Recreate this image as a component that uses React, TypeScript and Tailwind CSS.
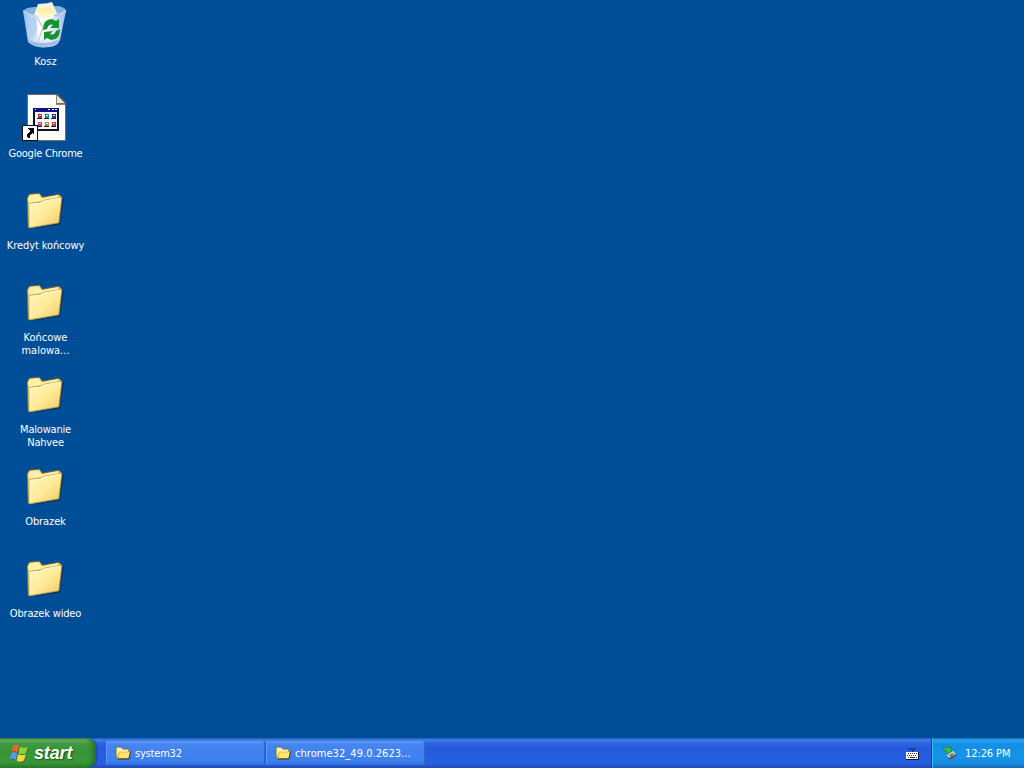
import React from 'react';

interface IconProps {
    className?: string;
}

interface DesktopItem {
    lines: string[];
    spacing: string;
    icon: React.FC<IconProps>;
}

const RecycleBinIcon: React.FC<IconProps> = ({ className }) => (
    <svg className={className} viewBox="0 0 48 48">
        <defs>
            <linearGradient id="bin" x1="0" y1="0" x2="1" y2="0">
                <stop offset="0" stopColor="#8fb9ea" />
                <stop offset="0.25" stopColor="#cfe2f6" />
                <stop offset="0.6" stopColor="#eaf3f9" />
                <stop offset="1" stopColor="#a3bdea" />
            </linearGradient>
        </defs>
        <path d="M2 10 Q5 6 15 6 L38 5 Q46 7 45 11 Q40 14 25 15 Q8 16 2 10Z" fill="#86b2e2" />
        <path d="M13 14 L17 3 L29 2 L34 14Z" fill="#f6f3d8" />
        <path d="M26 12 L27 2 L31 1 L36 12 L32 16Z" fill="#eef1f6" />
        <path d="M16 8 L31 5 L35 13 L20 17Z" fill="#fdf0a6" />
        <path d="M2 10 Q12 17 25 16 Q39 15 45 10 L39 39 Q37 45 28 46 Q14 48 7 41Z" fill="url(#bin)" />
        <path d="M6 17 L15 16 L17 26 L11 39Z" fill="#b3ccf2" opacity="0.8" />
        <path d="M15 12 L34 11 L28 28 L20 38 L17 42Z" fill="#fffef4" opacity="0.9" />
        <path d="M17 11 L33 8 L34 13 L20 16Z" fill="#fdf3b4" opacity="0.8" />
        <path d="M16 16 L22 27 L17 41" fill="none" stroke="#b9c6e8" strokeWidth="1.2" />
        <path d="M7 39 Q20 45 38 39 Q35 46 24 46 Q12 47 7 39Z" fill="#8eace6" opacity="0.75" />
        <path d="M2 10 Q8 14 15 15" fill="none" stroke="#e8f4ff" strokeWidth="0.9" />
        <path d="M34 14 Q41 13 45 10" fill="none" stroke="#e8f4ff" strokeWidth="0.9" />
        <g fill="#17912c">
            <path d="M22 29 Q22 18 31 18 L35 20 L38 18 L38 27 L29 27 L32 24 Q28 22 26 28Z" />
            <path d="M23 31 L32 30 L29 33 Q33 35 35 30 L39 28 Q39 39 30 39 L26 37 L23 39Z" />
        </g>
    </svg>
);

const ProgramIcon: React.FC<IconProps> = ({ className }) => (
    <svg className={className} viewBox="0 0 48 48" shapeRendering="crispEdges">
        <path d="M6 1 H36 L45 10 V48 H6Z" fill="#796b52" />
        <path d="M7 2 H35 V11 H44 V47 H7Z" fill="#fdfdfd" />
        <path d="M36 3 L43 10 H36Z" fill="#e9e7df" />
        <path d="M35 2 V11 H44" fill="none" stroke="#8d8673" strokeWidth="1" />
        <path d="M12 15 H38 V38 H12Z" fill="#12121c" />
        <path d="M12 15 H37 V19 H12Z" fill="#101087" />
        <path d="M14 19 H36 V36 H14Z" fill="#f5f5f5" />
        <path d="M14 16h1v1h-1zM27 16h2v1h-2zM31 16h2v1h-2zM34 16h2v1h-2z" fill="#ffffff" />
        <path d="M17 21h4v4h-4z" fill="#be2929" />
        <path d="M24 21h4v4h-4z" fill="#208d9b" />
        <path d="M31 21h4v4h-4z" fill="#243a9a" />
        <path d="M17 29h4v4h-4z" fill="#b03e81" />
        <path d="M24 29h4v4h-4z" fill="#b6893b" />
        <path d="M31 29h4v4h-4z" fill="#be3540" />
        <path d="M16 25h5v1h-5zM23 25h5v1h-5zM30 25h5v1h-5zM16 33h5v1h-5zM23 33h5v1h-5zM30 33h5v1h-5zM17 21h1v1h-1zM24 21h1v1h-1zM31 21h1v1h-1z" fill="#222222" />
        <path d="M18 22h2v1h-2zM25 22h2v1h-2zM32 22h2v1h-2zM18 30h2v1h-2zM25 30h2v1h-2zM32 30h2v1h-2z" fill="#f2e8e8" />
        <path d="M1 32 H17 V48 H1Z" fill="#101010" />
        <path d="M2 33 H16 V47 H2Z" fill="#ffffff" />
        <path d="M6 35 H13 V42 L11 40 L9 42 V45 H7 L6 43 L7 40 L9 38Z" fill="#050505" />
    </svg>
);

const FolderIcon: React.FC<IconProps> = ({ className }) => (
    <svg className={className} viewBox="0 0 47 47">
        <defs>
            <linearGradient id="folder" x1="0" y1="0" x2="1" y2="1">
                <stop offset="0" stopColor="#fff6b9" />
                <stop offset="0.5" stopColor="#ffec9b" />
                <stop offset="1" stopColor="#edc65c" />
            </linearGradient>
        </defs>
        <path d="M8 43 L38 39 L42 13 L40 11 L37 37Z" fill="#07294a" opacity="0.7" />
        <path d="M7 42 L6 13 L8 9 L18 8 L21 12 L37 9 L40 12 L37 37Z" fill="#ebcb68" stroke="#6f612b" strokeWidth="0.8" />
        <path d="M7 13 L9 10 L17 9 L20 13 L36 10 V13 L11 17 L8 19Z" fill="#fff0a9" />
        <path d="M8 18 L19 17 L22 15 L40 12 L37 37 L8 42Z" fill="url(#folder)" stroke="#a99547" strokeWidth="0.7" />
        <path d="M9 41 L9 19 L20 18 L23 16 L38 13" fill="none" stroke="#fffbd2" strokeWidth="1" />
    </svg>
);

const SmallFolderIcon: React.FC<IconProps> = ({ className }) => (
    <svg className={className} viewBox="0 0 16 16">
        <path d="M1 3 L2 2 H6 L8 4 H13 L14 5 V13 L3 14 L1 11Z" fill="#f1cd58" stroke="#7d6a25" strokeWidth="0.7" />
        <path d="M2 3 H6 L8 5 H13 V7 H4 L2 11Z" fill="#fff5b6" />
        <path d="M4 7 H15.5 L13.5 13.5 H3Z" fill="#ffe770" stroke="#b3892e" strokeWidth="0.5" />
        <path d="M3 14 H14 L15.5 7" fill="none" stroke="#39361f" strokeWidth="1" />
    </svg>
);

const WindowsFlag: React.FC<IconProps> = ({ className }) => (
    <svg className={className} viewBox="0 0 20 20">
        <g fill="#1d5c22" opacity="0.6" transform="translate(0.8 0.8)">
            <path d="M4 3 Q7 0 10 3 L8.5 9.5 Q5 7 2.5 9.5Z" />
            <path d="M11 3.5 Q15 6 19 3.5 L17.2 10 Q13 12.5 9.5 10Z" />
            <path d="M2.2 10.5 Q5.3 8 8.3 10.5 L6.8 17 Q4 14 .6 17Z" />
            <path d="M9.3 11 Q13 13.5 17 11 L15 17.5 Q11 20 7.6 17.5Z" />
        </g>
        <path d="M4 3 Q7 0 10 3 L8.5 9.5 Q5 7 2.5 9.5Z" fill="#f0632f" />
        <path d="M11 3.5 Q15 6 19 3.5 L17.2 10 Q13 12.5 9.5 10Z" fill="#8bcf3a" />
        <path d="M2.2 10.5 Q5.3 8 8.3 10.5 L6.8 17 Q4 14 .6 17Z" fill="#5b94f5" />
        <path d="M9.3 11 Q13 13.5 17 11 L15 17.5 Q11 20 7.6 17.5Z" fill="#fcd63a" />
    </svg>
);

const KeyboardIcon: React.FC<IconProps> = ({ className }) => (
    <svg className={className} viewBox="0 0 16 16" shapeRendering="crispEdges">
        <path d="M4 2h1v1H4zM5 3h2v1H5zM7 2h2v1H7zM9 3h2v1H9zM11 2h1v1h-1zM8 4h1v2H8z" fill="#10205c" />
        <path d="M2 6h13v8H2z" fill="#081944" />
        <path d="M2 6h12v7H2z" fill="#ffffff" />
        <path d="M4 7h1v1H4zM6 7h1v1H6zM8 7h1v1H8zM10 7h1v1h-1zM12 7h1v1h-1zM3 9h1v1H3zM5 9h1v1H5zM7 9h1v1H7zM9 9h1v1H9zM11 9h1v1h-1zM4 11h1v1H4zM6 11h5v1H6zM12 11h1v1h-1z" fill="#283247" />
    </svg>
);

const RemoveHardwareIcon: React.FC<IconProps> = ({ className }) => (
    <svg className={className} viewBox="0 0 16 16">
        <path d="M4 11 L12 7 L15 10 L8 15Z" fill="#4a5354" />
        <path d="M4 10 L11 6 L14 9 L7 13Z" fill="#c9d1c7" />
        <path d="M7 11 L10 8 L12 9 L9 12Z" fill="#6d7776" />
        <path d="M1 3 L3 2 L4 3 L9 2 L9 7 L7 7 L6 10 L4 7 L5 6 L2 5Z" fill="#3fc544" stroke="#16702e" strokeWidth="0.6" />
    </svg>
);

const desktopItems: DesktopItem[] = [
    { lines: ['Kosz'], spacing: 'tracking-normal', icon: RecycleBinIcon },
    { lines: ['Google Chrome'], spacing: 'tracking-[-0.22px]', icon: ProgramIcon },
    { lines: ['Kredyt końcowy'], spacing: 'tracking-[-0.1px]', icon: FolderIcon },
    { lines: ['Końcowe', 'malowa...'], spacing: 'tracking-normal', icon: FolderIcon },
    { lines: ['Malowanie', 'Nahvee'], spacing: 'tracking-[-0.2px]', icon: FolderIcon },
    { lines: ['Obrazek'], spacing: 'tracking-[-0.1px]', icon: FolderIcon },
    { lines: ['Obrazek wideo'], spacing: 'tracking-[-0.18px]', icon: FolderIcon },
];

const tasks = [
    { title: 'system32', spacing: 'tracking-[-0.2px]' },
    { title: 'chrome32_49.0.2623...', spacing: 'tracking-[0.05px]' },
];

const DesktopShortcut: React.FC<{ item: DesktopItem }> = ({ item }) => {
    const Icon = item.icon;
    return (
        <div className="flex h-[92px] flex-col items-center">
            <Icon className="h-12 w-12 shrink-0" />
            <div className={`mt-1.5 whitespace-nowrap pl-px text-center text-[11px] leading-[13px] text-white ${item.spacing}`}>
                {item.lines.map(line => (
                    <div key={line}>{line}</div>
                ))}
            </div>
        </div>
    );
};

const Taskbar: React.FC = () => (
    <footer className="flex h-[30px] shrink-0 bg-[linear-gradient(to_bottom,#1f58b8_0px,#4281ed_2px,#3164df_5px,#245bdc_10px,#265fe0_25px,#204bba_30px)]">
        <button className="flex h-full w-24 shrink-0 items-center rounded-r-[9px] bg-[linear-gradient(to_bottom,#32783b_0px,#62ad62_2px,#419941_6px,#359435_13px,#39983a_24px,#277d2b_30px)] pl-[9px] shadow-[inset_-5px_0_5px_-2px_#246d2c,1px_0_2px_#1746ae]">
            <WindowsFlag className="h-5 w-5" />
            <span className="ml-[5px] font-['Liberation_Sans',sans-serif] text-[18px] font-bold italic leading-5 tracking-[-0.15px] text-white [text-shadow:1px_1px_2px_#164d17]">start</span>
        </button>
        <div className="flex min-w-0 flex-1 items-end pb-[3px] pl-[10px]">
            {tasks.map(task => (
                <button
                    key={task.title}
                    className="mr-px flex h-[24px] w-[159px] items-center rounded-[2px] bg-[linear-gradient(to_bottom,#659bf5_0px,#4685f2_3px,#3c7fee_20px,#3370dc_24px)] pl-[9px] text-[11px] text-white shadow-[inset_1px_0_#5f98fa,inset_-1px_0_#2d67cd]"
                >
                    <SmallFolderIcon className="h-4 w-4 shrink-0" />
                    <span className={`ml-1 whitespace-nowrap pt-0.5 ${task.spacing}`}>{task.title}</span>
                </button>
            ))}
        </div>
        <div className="flex items-center pr-[11px] pt-px">
            <KeyboardIcon className="h-4 w-4" />
        </div>
        <div className="flex w-[93px] shrink-0 items-center border-l border-[#123f8c] bg-[linear-gradient(to_bottom,#1769bd_0px,#29a7f0_2px,#168de5_6px,#1395ea_20px,#1787dc_26px,#1767b5_30px)] pl-[10px] shadow-[inset_1px_0_#35bdf6]">
            <RemoveHardwareIcon className="h-4 w-4" />
            <span className="ml-[7px] whitespace-nowrap pt-0.5 text-[11px] tracking-[-0.1px] text-white">12:26 PM</span>
        </div>
    </footer>
);

export default function App() {
    return (
        <div className="flex h-screen w-screen flex-col overflow-hidden bg-[#004e98] font-['DejaVu_Sans_Condensed','DejaVu_Sans',sans-serif]">
            <main className="min-h-0 flex-1 pt-px">
                <div className="w-[90px]">
                    {desktopItems.map(item => (
                        <DesktopShortcut key={item.lines[0]} item={item} />
                    ))}
                </div>
            </main>
            <Taskbar />
        </div>
    );
}
